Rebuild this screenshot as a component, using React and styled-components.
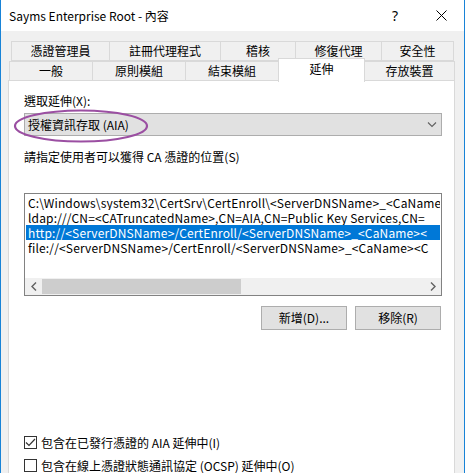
import React from "react";
import styled, { createGlobalStyle } from "styled-components";

const Global = createGlobalStyle`
  html, body { margin: 0; padding: 0; background: #ffffff; }
  body { font-family: "Noto Sans CJK TC", "Noto Sans", sans-serif; font-size: 12px; color: #000; }
  * { box-sizing: border-box; }
`;

const Window = styled.div`
  width: 465px;
  height: 473px;
  border-left: 1px solid #1883d7;
  border-right: 1px solid #1883d7;
  background: #f0f0f0;
  display: flex;
  flex-direction: column;
  overflow: hidden;
`;

const TitleBar = styled.div`
  height: 31px;
  flex: none;
  background: #ffffff;
  display: flex;
  align-items: center;
  padding-left: 8px;
`;

const Title = styled.div`
  flex: 1;
  font-size: 12px;
  line-height: 16px;
  padding-top: 1px;
`;

const TitleButton = styled.div`
  width: ${(p) => p.$w}px;
  height: 31px;
  display: flex;
  align-items: center;
  justify-content: center;
  font-family: "Noto Sans", sans-serif;
  font-size: 14px;
`;

const Body = styled.div`
  flex: 1;
  display: flex;
  flex-direction: column;
  padding: 10px 9px 0 7px;
  min-height: 0;
`;

const TabRows = styled.div`
  display: flex;
  flex-direction: column;
  flex: none;
`;

const TabRow = styled.div`
  display: flex;
  padding-left: ${(p) => p.$indent}px;
  height: 20px;
`;

const Tab = styled.div`
  width: ${(p) => p.$w}px;
  height: ${(p) => (p.$active ? 24 : 20)}px;
  margin-top: ${(p) => (p.$active ? -3 : 0)}px;
  margin-left: -1px;
  position: relative;
  z-index: ${(p) => (p.$active ? 2 : 1)};
  background: ${(p) => (p.$active ? "#ffffff" : "#f0f0f0")};
  border: 1px solid #d9d9d9;
  border-bottom: ${(p) => (p.$active ? "none" : "1px solid #d9d9d9")};
  display: flex;
  justify-content: center;
  align-items: ${(p) => (p.$active ? "flex-start" : "center")};
  padding-top: ${(p) => (p.$active ? 2 : 0)}px;
  line-height: 16px;
  &:first-child { margin-left: 0; }
`;

const Panel = styled.div`
  flex: 1;
  margin-top: -1px;
  background: #ffffff;
  border: 1px solid #d9d9d9;
  border-bottom: none;
  padding: 12px 12px 0 15px;
  display: flex;
  flex-direction: column;
`;

const Label = styled.div`
  line-height: 16px;
  margin-top: ${(p) => p.$mt || 0}px;
`;

const ComboWrap = styled.div`
  position: relative;
  margin-top: 4px;
`;

const Combo = styled.div`
  height: 23px;
  background: #e1e1e1;
  border: 1px solid #adadad;
  display: flex;
  align-items: center;
  padding: 0 0 0 3px;
  line-height: 16px;
`;

const ComboText = styled.div`
  flex: 1;
`;

const Chevron = styled.svg`
  width: 10px;
  height: 6px;
  margin-right: 4px;
  margin-top: 1px;
`;

const Highlight = styled.svg`
  position: absolute;
  left: -11px;
  top: -5px;
  width: 136px;
  height: 36px;
  pointer-events: none;
`;

const ListBox = styled.div`
  margin-top: 28px;
  height: 103px;
  border: 1px solid #828282;
  background: #ffffff;
  display: flex;
  flex-direction: column;
`;

const ListItems = styled.div`
  flex: 1;
  padding-top: 1px;
  overflow: hidden;
`;

const ListItem = styled.div`
  height: 15px;
  line-height: 15px;
  margin: 0 1px;
  padding-left: 2px;
  white-space: nowrap;
  overflow: hidden;
  letter-spacing: 0.15px;
  font-family: "Noto Sans CJK TC", sans-serif;
  background: ${(p) => (p.$selected ? "#0078d7" : "transparent")};
  color: ${(p) => (p.$selected ? "#ffffff" : "#000000")};
`;

const HScroll = styled.div`
  height: 17px;
  flex: none;
  background: #f0f0f0;
  display: flex;
  align-items: center;
`;

const ScrollArrow = styled.div`
  width: 17px;
  height: 17px;
  display: flex;
  align-items: center;
  justify-content: center;
`;

const ScrollTrack = styled.div`
  flex: 1;
  height: 17px;
  display: flex;
  align-items: center;
`;

const Thumb = styled.div`
  height: 15px;
  background: #cdcdcd;
`;

const ButtonRow = styled.div`
  display: flex;
  justify-content: flex-end;
  gap: 8px;
  margin-top: 10px;
  padding-right: 1px;
`;

const Button = styled.div`
  width: 86px;
  height: 24px;
  background: #e1e1e1;
  border: 1px solid #adadad;
  display: flex;
  align-items: center;
  justify-content: center;
  line-height: 16px;
`;

const CheckRow = styled.div`
  display: flex;
  align-items: center;
  gap: 4px;
  height: 16px;
  margin-top: ${(p) => p.$mt}px;
`;

const Box = styled.div`
  width: 13px;
  height: 13px;
  border: 1px solid #333333;
  background: #ffffff;
  display: flex;
  align-items: center;
  justify-content: center;
`;

const row1 = [
  ["憑證管理員", 99],
  ["註冊代理程式", 112],
  ["稽核", 76],
  ["修復代理", 87],
  ["安全性", 73],
];
const row2 = [
  ["一般", 84],
  ["原則模組", 94],
  ["結束模組", 94],
  ["延伸", 87, true],
  ["存放裝置", 91],
];

const items = [
  "C:\\Windows\\system32\\CertSrv\\CertEnroll\\<ServerDNSName>_<CaName",
  "ldap:///CN=<CATruncatedName>,CN=AIA,CN=Public Key Services,CN=",
  "http://<ServerDNSName>/CertEnroll/<ServerDNSName>_<CaName><",
  "file://<ServerDNSName>/CertEnroll/<ServerDNSName>_<CaName><C",
];

const Arrow = ({ dir }) => (
  <svg width="6" height="9" viewBox="0 0 6 9">
    <path
      d={dir === "left" ? "M5 0.5 L1 4.5 L5 8.5" : "M1 0.5 L5 4.5 L1 8.5"}
      fill="none"
      stroke="#606060"
      strokeWidth="1.4"
    />
  </svg>
);

export default function App() {
  return (
    <>
      <Global />
      <Window>
        <TitleBar>
          <Title>Sayms Enterprise Root - 內容</Title>
          <TitleButton $w={46}>?</TitleButton>
          <TitleButton $w={46}>
            <svg width="11" height="11" viewBox="0 0 11 11">
              <path d="M0.5 0.5 L10.5 10.5 M10.5 0.5 L0.5 10.5" stroke="#000" strokeWidth="1" />
            </svg>
          </TitleButton>
        </TitleBar>
        <Body>
          <TabRows>
            <TabRow $indent={3}>
              {row1.map(([t, w]) => (
                <Tab key={t} $w={w}>{t}</Tab>
              ))}
            </TabRow>
            <TabRow $indent={1}>
              {row2.map(([t, w, a]) => (
                <Tab key={t} $w={w} $active={a}>{t}</Tab>
              ))}
            </TabRow>
          </TabRows>
          <Panel>
            <Label>選取延伸(X):</Label>
            <ComboWrap>
              <Combo>
                <ComboText>授權資訊存取 (AIA)</ComboText>
                <Chevron viewBox="0 0 10 6">
                  <path d="M1 0.5 L5 4.5 L9 0.5" fill="none" stroke="#606060" strokeWidth="1.1" />
                </Chevron>
              </Combo>
              <Highlight viewBox="0 0 136 36">
                <ellipse cx="68" cy="18" rx="66" ry="15.5" fill="none" stroke="#9b4fa2" strokeWidth="2.2" />
              </Highlight>
            </ComboWrap>
            <Label $mt={13}>請指定使用者可以獲得 CA 憑證的位置(S)</Label>
            <ListBox>
              <ListItems>
                {items.map((t, i) => (
                  <ListItem key={i} $selected={i === 2}>{t}</ListItem>
                ))}
              </ListItems>
              <HScroll>
                <ScrollArrow><Arrow dir="left" /></ScrollArrow>
                <ScrollTrack>
                  <Thumb style={{ width: "199px" }} />
                </ScrollTrack>
                <ScrollArrow><Arrow dir="right" /></ScrollArrow>
              </HScroll>
            </ListBox>
            <ButtonRow>
              <Button>新增(D)...</Button>
              <Button>移除(R)</Button>
            </ButtonRow>
            <CheckRow $mt={104}>
              <Box>
                <svg width="11" height="9" viewBox="0 0 11 9">
                  <path d="M1 4.5 L4 7.5 L10 1" fill="none" stroke="#333" strokeWidth="1.2" />
                </svg>
              </Box>
              包含在已發行憑證的 AIA 延伸中(I)
            </CheckRow>
            <CheckRow $mt={7}>
              <Box />
              包含在線上憑證狀態通訊協定 (OCSP) 延伸中(O)
            </CheckRow>
          </Panel>
        </Body>
      </Window>
    </>
  );
}
